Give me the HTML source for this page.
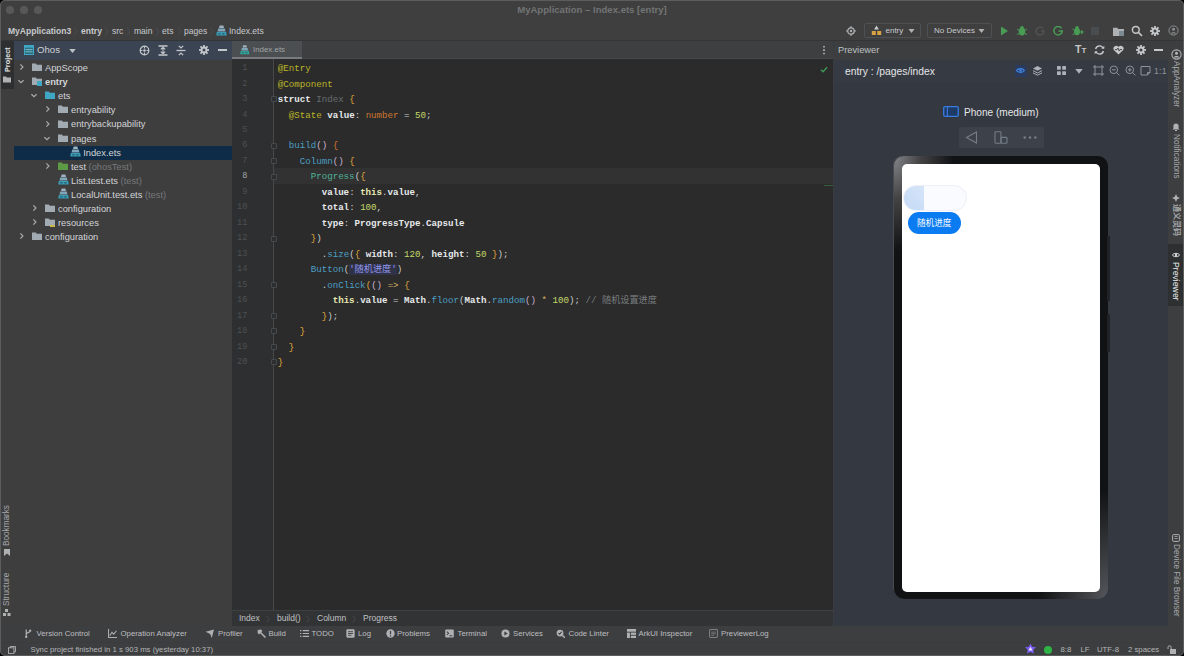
<!DOCTYPE html>
<html lang="zh">
<head>
<meta charset="utf-8">
<title>MyApplication – Index.ets [entry]</title>
<style>
*{box-sizing:border-box;margin:0;padding:0}
html,body{width:1184px;height:656px;overflow:hidden;background:#3d3e40}
body{font-family:"Liberation Sans","Noto Sans CJK SC",sans-serif;font-size:9.2px;color:#bbbbbb}
#app{position:relative;width:1184px;height:656px;overflow:hidden;background:#3d3e40}
.abs{position:absolute}
.t{position:absolute;white-space:nowrap;line-height:14px;height:14px}
#title{left:0;top:0;width:1184px;height:21px;background:#3f3f3f}
#title .name{left:0;width:1184px;top:2.5px;text-align:center;color:#727475;font-weight:bold;font-size:9.55px}
.tl{position:absolute;top:6.3px;width:7.6px;height:7.6px;border-radius:50%;background:#585858}
#nav{left:0;top:21px;width:1184px;height:20px;background:#3f3f40;border-bottom:1px solid #333536}
#nav .t{top:3px;color:#c8cacc;font-size:8.55px}
.combo{border:1px solid #4e5153;border-radius:2px}
#lstripe{left:0;top:41px;width:14px;height:585px;background:#3e3e3f}
#rstripe{left:1168px;top:41px;width:16px;height:584px;background:#3d3e40}
.vt{position:absolute;white-space:nowrap;font-size:8.2px;line-height:10px;height:10px;transform-origin:0 0;color:#a6a8aa}
#proj{left:14px;top:41px;width:218px;height:585px;background:#3e3e3f}
#projhead{left:0;top:0;width:218px;height:19px;background:#3b4453}
.row{position:absolute;left:0;width:218px;height:14px}
.row .t{top:0;color:#d2d4d6;font-size:9.3px}
.row.sel{background:#0e2c48}
.gray{color:#75787a}
#tabs{left:232px;top:41px;width:601px;height:18px;background:#3e3f40;border-bottom:1px solid #47494a}
#tab{left:0;top:0;width:70px;height:18px;background:#4b4f51;border-bottom:2px solid #777b7f}
#editor{left:232px;top:59px;width:601px;height:551px;background:#2b2b2b;overflow:hidden}
#gutter{left:0;top:0;width:42px;height:551px;background:#2e2f30;border-right:1px solid #47494b}
#curline{left:42px;width:559px;background:#323232}
.ln{position:absolute;left:0;width:15.3px;text-align:right;font-family:"Liberation Mono",monospace;font-size:8.6px;color:#4d5053;line-height:15.47px;height:15.47px}
.cl{position:absolute;left:45.7px;white-space:pre;font-family:"Liberation Mono","Noto Sans CJK SC",monospace;font-size:9.17px;line-height:15.47px;height:15.47px;color:#e6e8ea;font-weight:bold}
.cl span{font-weight:normal}
.an{color:#bbb529}
.kw{color:#cc7832}
.dim{color:#666b70}
.br{color:#e0a93a}
.br2{color:#d9762e}
.fn{color:#4d9fc4}
.fn2{color:#4fb39a}
.num{color:#c3d86a}
.pl{color:#c9cbcd}
.pl2{color:#d0b060}
.str{color:#9096ea;background:rgba(58,62,120,.38)}
.cm{color:#787b7e}
.cl span.th{color:#e6e8b0;font-weight:bold}
.fold{position:absolute;left:39px;width:6px;height:6px;border:1px solid #46494b;background:#2d2e2f;border-radius:1px}
#crumbs{left:232px;top:610px;width:601px;height:16px;background:#323334;border-top:1px solid #3e3f40}
#crumbs .t{top:0px;color:#c0c2c4;font-size:8.5px}
#prev{left:833px;top:41px;width:335px;height:585px;background:#343840;border-left:1px solid #383b3f}
#prevhead{left:0;top:0;width:335px;height:19px;background:#3c3e40}
#prevbar{left:0;top:19px;width:335px;height:23px;background:#363a43}
#phone{left:59px;top:114.5px;width:214.6px;height:443.6px;border-radius:10px;background:radial-gradient(ellipse 60px 95px at 0 0,rgba(140,142,146,.95) 0,rgba(110,108,108,.55) 45%,rgba(60,58,58,0) 100%),radial-gradient(ellipse 70px 110px at 100% 100%,rgba(100,103,108,.8) 0,rgba(70,72,76,0) 100%),#111214;box-shadow:inset 1px 0 0 #474b52}
#screen{left:8.8px;top:8.3px;width:198.2px;height:428.6px;border-radius:5px;background:#fff;overflow:hidden}
#capsule{left:1.4px;top:21.2px;width:64px;height:26.4px;border-radius:13.2px;background:#f9fbfe;border:1px solid #eceff5;overflow:hidden}
#capfill{left:-1px;top:-1px;width:20.5px;height:26px;background:linear-gradient(45deg,#c3d9f6,#d6e5f9)}
#btn{left:5.9px;top:48.6px;width:53px;height:22px;border-radius:11px;background:#0a7bf0;color:#fff;font-size:8.6px;line-height:22px;text-align:center;font-family:"Liberation Sans","Noto Sans CJK SC",sans-serif}
#tools{left:0;top:626px;width:1184px;height:16px;background:#3d3e3f}
#tools .t{top:0.5px;color:#bdbfc1;font-size:7.8px}
#status{left:0;top:642px;width:1184px;height:14px;background:#3d3e3f;border-top:1px solid #393b3d}
#status .t{top:-0.5px;color:#b4b6b8;font-size:7.78px}
#frame{left:0;top:0;width:1184px;height:656px;border:1px solid #5c5d5d;border-radius:5px;box-shadow:0 0 0 8px #000;pointer-events:none}
.br3{color:#cdb3d4}
</style>
</head>
<body>
<div id="app">
<div id="title" class="abs">
<div class="tl" style="left:6px"></div>
<div class="tl" style="left:20px"></div>
<div class="tl" style="left:34px"></div>
<div class="t name">MyApplication – Index.ets [entry]</div>
</div>
<div id="nav" class="abs">
<div class="t" style="left:8px;font-weight:bold;">MyApplication3</div>
<div class="t" style="left:81px;font-weight:bold;">entry</div>
<div class="t" style="left:112px;">src</div>
<div class="t" style="left:134px;">main</div>
<div class="t" style="left:162px;">ets</div>
<div class="t" style="left:184px;">pages</div>
<div class="t" style="left:229px;">Index.ets</div>
<svg class="abs" style="left:73px;top:6px" width="5" height="9" viewBox="0 0 5 9"><path d="M1 0.5l3 4-3 4" fill="none" stroke="#4d5052" stroke-width="0.9"/></svg>
<svg class="abs" style="left:104px;top:6px" width="5" height="9" viewBox="0 0 5 9"><path d="M1 0.5l3 4-3 4" fill="none" stroke="#4d5052" stroke-width="0.9"/></svg>
<svg class="abs" style="left:126px;top:6px" width="5" height="9" viewBox="0 0 5 9"><path d="M1 0.5l3 4-3 4" fill="none" stroke="#4d5052" stroke-width="0.9"/></svg>
<svg class="abs" style="left:155px;top:6px" width="5" height="9" viewBox="0 0 5 9"><path d="M1 0.5l3 4-3 4" fill="none" stroke="#4d5052" stroke-width="0.9"/></svg>
<svg class="abs" style="left:177px;top:6px" width="5" height="9" viewBox="0 0 5 9"><path d="M1 0.5l3 4-3 4" fill="none" stroke="#4d5052" stroke-width="0.9"/></svg>
<svg class="abs" style="left:209px;top:6px" width="5" height="9" viewBox="0 0 5 9"><path d="M1 0.5l3 4-3 4" fill="none" stroke="#4d5052" stroke-width="0.9"/></svg>
<svg class="abs" style="left:216px;top:4px" width="11" height="11" viewBox="0 0 11 11"><path d="M3.6 0.4h3.8l.6 2.6H3z" fill="#9fb2be"/><path d="M2.2 3.6h6.6l.7 2.8h-8z" fill="#7fa6ba"/><path d="M0.8 7h9.4l.5 3.6H0.3z" fill="#3a9db6"/><rect x="2.2" y="8" width="2.4" height="1.6" fill="#1f3a44" opacity=".5"/><rect x="6.2" y="8" width="2.4" height="1.6" fill="#1f3a44" opacity=".5"/></svg>
<svg class="abs" style="left:846px;top:5px" width="10" height="10" viewBox="0 0 10 10"><circle cx="5" cy="5" r="3.2" fill="none" stroke="#afb1b3" stroke-width="1.2"/><circle cx="5" cy="5" r="1.2" fill="#afb1b3"/><path d="M5 0v2M5 8v2M0 5h2M8 5h2" stroke="#afb1b3" stroke-width="1.1"/></svg>
<div class="abs combo" style="left:864px;top:2px;width:57px;height:15px"></div>
<svg class="abs" style="left:871px;top:4px" width="11" height="11" viewBox="0 0 11 11"><path d="M5.5 0.5l2.4 4H3.1z" fill="#c9ccce"/><rect x="0.8" y="6" width="4" height="4" fill="#d9a343"/><rect x="6.2" y="6" width="4" height="4" fill="#d9a343"/></svg>
<div class="t" style="left:885.5px;font-size:8px">entry</div>
<svg class="abs" style="left:908px;top:8px" width="7" height="4" viewBox="0 0 7 4"><path d="M0.5 0h6L3.5 4z" fill="#afb1b3"/></svg>
<div class="abs combo" style="left:927px;top:2px;width:65px;height:15px"></div>
<div class="t" style="left:934px;font-size:8px">No Devices</div>
<svg class="abs" style="left:978px;top:8px" width="7" height="4" viewBox="0 0 7 4"><path d="M0.5 0h6L3.5 4z" fill="#afb1b3"/></svg>
<svg class="abs" style="left:1000px;top:5px" width="9" height="10" viewBox="0 0 9 10"><path d="M1 0.5l7 4.5-7 4.5z" fill="#499c54"/></svg>
<svg class="abs" style="left:1017px;top:5px" width="10" height="10" viewBox="0 0 10 10"><ellipse cx="5" cy="5.6" rx="3.2" ry="4" fill="#499c54"/><circle cx="5" cy="1.8" r="1.8" fill="#499c54"/><path d="M0 3l2 1.5M10 3l-2 1.5M0 8.5l2-1M10 8.5l-2-1" stroke="#499c54" stroke-width="1"/></svg>
<svg class="abs" style="left:1035px;top:5px" width="10" height="10" viewBox="0 0 10 10"><path d="M8 2.5A4 4 0 1 0 9 5H6" fill="none" stroke="#515456" stroke-width="1.4"/></svg>
<svg class="abs" style="left:1053px;top:5px" width="10" height="10" viewBox="0 0 10 10"><path d="M8.5 2.2A4.2 4.2 0 1 0 9.3 5H5.5" fill="none" stroke="#499c54" stroke-width="1.5"/></svg>
<svg class="abs" style="left:1072px;top:4px" width="12" height="12" viewBox="0 0 12 12"><ellipse cx="5" cy="6.5" rx="3" ry="3.8" fill="#499c54"/><circle cx="5" cy="2.6" r="1.7" fill="#499c54"/><path d="M7 7h4M9 5.5L11 7 9 8.8" stroke="#499c54" stroke-width="1.2" fill="none"/><path d="M0.5 4l2 1.4M0.5 9.8l2-1.2" stroke="#499c54" stroke-width="1"/></svg>
<div class="abs" style="left:1091px;top:6px;width:8px;height:8px;background:#4a4d4f"></div>
<svg class="abs" style="left:1113px;top:6px" width="11" height="9" viewBox="0 0 10 8"><path d="M0 0.6h3.8l1 1.2H10V8H0z" fill="#afb1b3"/></svg>
<div class="abs" style="left:1119px;top:10px;width:5px;height:5px;background:#7c8a94"></div>
<svg class="abs" style="left:1131px;top:4px" width="12" height="12" viewBox="0 0 12 12"><circle cx="4.8" cy="4.8" r="3.4" fill="none" stroke="#c4c6c8" stroke-width="1.5"/><path d="M7.4 7.4L11 11" stroke="#c4c6c8" stroke-width="1.7"/></svg>
<svg class="abs" style="left:1150px;top:5px" width="10" height="10" viewBox="0 0 10 10"><g fill="#c4c6c8"><circle cx="5" cy="5" r="3.4"/><rect x="4.1" y="0" width="1.8" height="10" transform="rotate(0 5 5)"/><rect x="4.1" y="0" width="1.8" height="10" transform="rotate(45 5 5)"/><rect x="4.1" y="0" width="1.8" height="10" transform="rotate(90 5 5)"/><rect x="4.1" y="0" width="1.8" height="10" transform="rotate(135 5 5)"/></g><circle cx="5" cy="5" r="1.5" fill="#3c3f41"/></svg>
<svg class="abs" style="left:1168px;top:4px" width="11" height="11" viewBox="0 0 11 11"><circle cx="5.5" cy="5.5" r="4.6" fill="none" stroke="#8d9092" stroke-width="1"/><circle cx="5.5" cy="4.3" r="1.5" fill="#8d9092"/><path d="M2.8 8.6c.6-1.8 4.8-1.8 5.4 0" fill="#8d9092"/></svg>
</div>
<div id="lstripe" class="abs">
<div class="abs" style="left:0;top:0;width:14px;height:48px;background:#2d2f30"></div>
<div class="vt" style="left:2.5px;top:30.5px;transform:rotate(-90deg);color:#e0e2e4;font-weight:bold;font-size:7.3px">Project</div>
<svg class="abs" style="left:3px;top:35px" width="8" height="6.5" viewBox="0 0 10 8"><path d="M0 0.6h3.8l1 1.2H10V8H0z" fill="#afb1b3"/></svg>
<div class="vt" style="left:2px;top:505px;transform:rotate(-90deg)">Bookmarks</div>
<svg class="abs" style="left:4px;top:508px" width="6" height="7" viewBox="0 0 6 7"><path d="M0 0h6v7L3 4.6 0 7z" fill="#afb1b3"/></svg>
<div class="vt" style="left:2px;top:565px;transform:rotate(-90deg)">Structure</div>
<svg class="abs" style="left:3px;top:568px" width="8" height="7" viewBox="0 0 8 7"><rect x="0" y="4" width="3" height="3" fill="#afb1b3"/><rect x="4.5" y="4" width="3" height="3" fill="#afb1b3"/><rect x="2" y="0" width="3" height="3" fill="#afb1b3"/></svg>
</div>
<div id="proj" class="abs">
<div id="projhead" class="abs">
<svg class="abs" style="left:10px;top:4px" width="10" height="10" viewBox="0 0 10 10"><rect x="0.5" y="0.5" width="9" height="9" fill="#2c6f80" stroke="#3fa6c4" stroke-width="1"/><rect x="0.5" y="0.5" width="9" height="2.2" fill="#3fa6c4"/><path d="M1.5 4.6h7M1.5 6.8h7" stroke="#7fc4d4" stroke-width="0.9"/></svg>
<div class="t" style="left:23px;top:2px;font-size:9.6px;color:#cdd0d3">Ohos</div>
<svg class="abs" style="left:55px;top:8px" width="7" height="4" viewBox="0 0 7 4"><path d="M0.3 0h6.4L3.5 4z" fill="#c0c3c6"/></svg>
<svg class="abs" style="left:125px;top:4px" width="11" height="11" viewBox="0 0 11 11"><circle cx="5.5" cy="5.5" r="4.3" fill="none" stroke="#c4c7ca" stroke-width="1.2"/><circle cx="5.5" cy="5.5" r="1.3" fill="#c4c7ca"/><path d="M5.5 1v2.4M5.5 7.6V10M1 5.5h2.4M7.6 5.5H10" stroke="#c4c7ca" stroke-width="1.1"/></svg>
<svg class="abs" style="left:144px;top:4px" width="10" height="11" viewBox="0 0 10 11"><path d="M0.5 1h9M0.5 10h9" stroke="#c4c7ca" stroke-width="1.3"/><path d="M5 2.2v6.6M2.8 4.4L5 2.2l2.2 2.2M2.8 6.6L5 8.8l2.2-2.2" stroke="#c4c7ca" stroke-width="1.1" fill="none"/></svg>
<svg class="abs" style="left:162px;top:4px" width="10" height="11" viewBox="0 0 10 11"><path d="M0.5 5.5h9" stroke="#c4c7ca" stroke-width="1.3"/><path d="M2.8 0.8L5 3l2.2-2.2M2.8 10.2L5 8l2.2 2.2" stroke="#c4c7ca" stroke-width="1.2" fill="none"/></svg>
<svg class="abs" style="left:185px;top:4px" width="10" height="10" viewBox="0 0 10 10"><g fill="#c4c7ca"><circle cx="5" cy="5" r="3.4"/><rect x="4.1" y="0" width="1.8" height="10" transform="rotate(0 5 5)"/><rect x="4.1" y="0" width="1.8" height="10" transform="rotate(45 5 5)"/><rect x="4.1" y="0" width="1.8" height="10" transform="rotate(90 5 5)"/><rect x="4.1" y="0" width="1.8" height="10" transform="rotate(135 5 5)"/></g><circle cx="5" cy="5" r="1.5" fill="#3b4453"/></svg>
<div class="abs" style="left:204px;top:8px;width:9px;height:1.6px;background:#c4c7ca"></div>
</div>
<div class="row" style="top:20.0px">
<svg class="abs" style="left:4px;top:2.2px" width="7" height="8" viewBox="0 0 7 8"><path d="M2.4 1.4l2.5 2.6-2.5 2.6" fill="none" stroke="#a6a8aa" stroke-width="1.25"/></svg>
<svg class="abs" style="left:18px;top:2.2px" width="10" height="8" viewBox="0 0 10 8"><path d="M0 0.6h3.8l1 1.2H10V8H0z" fill="#a2abb2"/></svg>
<div class="t" style="left:31px;">AppScope</div>
</div>
<div class="row" style="top:34.1px">
<svg class="abs" style="left:3px;top:3.2px" width="8" height="7" viewBox="0 0 8 7"><path d="M1.4 2.2l2.6 2.5 2.6-2.5" fill="none" stroke="#a6a8aa" stroke-width="1.25"/></svg>
<svg class="abs" style="left:18px;top:2.2px" width="10" height="8" viewBox="0 0 10 8"><path d="M0 0.6h3.8l1 1.2H10V8H0z" fill="#a2abb2"/></svg>
<div class="abs" style="left:23px;top:6.2px;width:5px;height:5px;background:#3fa6c4"></div>
<div class="t" style="left:31px;font-weight:bold;">entry</div>
</div>
<div class="row" style="top:48.2px">
<svg class="abs" style="left:16px;top:3.2px" width="8" height="7" viewBox="0 0 8 7"><path d="M1.4 2.2l2.6 2.5 2.6-2.5" fill="none" stroke="#a6a8aa" stroke-width="1.25"/></svg>
<svg class="abs" style="left:31px;top:2.2px" width="10" height="8" viewBox="0 0 10 8"><path d="M0 0.6h3.8l1 1.2H10V8H0z" fill="#3fa6c4"/></svg>
<div class="t" style="left:44px;">ets</div>
</div>
<div class="row" style="top:62.3px">
<svg class="abs" style="left:30px;top:2.2px" width="7" height="8" viewBox="0 0 7 8"><path d="M2.4 1.4l2.5 2.6-2.5 2.6" fill="none" stroke="#a6a8aa" stroke-width="1.25"/></svg>
<svg class="abs" style="left:44px;top:2.2px" width="10" height="8" viewBox="0 0 10 8"><path d="M0 0.6h3.8l1 1.2H10V8H0z" fill="#a2abb2"/></svg>
<div class="t" style="left:57px;">entryability</div>
</div>
<div class="row" style="top:76.4px">
<svg class="abs" style="left:30px;top:2.2px" width="7" height="8" viewBox="0 0 7 8"><path d="M2.4 1.4l2.5 2.6-2.5 2.6" fill="none" stroke="#a6a8aa" stroke-width="1.25"/></svg>
<svg class="abs" style="left:44px;top:2.2px" width="10" height="8" viewBox="0 0 10 8"><path d="M0 0.6h3.8l1 1.2H10V8H0z" fill="#a2abb2"/></svg>
<div class="t" style="left:57px;">entrybackupability</div>
</div>
<div class="row" style="top:90.5px">
<svg class="abs" style="left:29px;top:3.2px" width="8" height="7" viewBox="0 0 8 7"><path d="M1.4 2.2l2.6 2.5 2.6-2.5" fill="none" stroke="#a6a8aa" stroke-width="1.25"/></svg>
<svg class="abs" style="left:44px;top:2.2px" width="10" height="8" viewBox="0 0 10 8"><path d="M0 0.6h3.8l1 1.2H10V8H0z" fill="#a2abb2"/></svg>
<div class="t" style="left:57px;">pages</div>
</div>
<div class="row sel" style="top:104.6px">
<svg class="abs" style="left:56px;top:0.4px" width="11" height="11" viewBox="0 0 11 11"><path d="M3.6 0.4h3.8l.6 2.6H3z" fill="#9fb2be"/><path d="M2.2 3.6h6.6l.7 2.8h-8z" fill="#7fa6ba"/><path d="M0.8 7h9.4l.5 3.6H0.3z" fill="#3a9db6"/><rect x="2.2" y="8" width="2.4" height="1.6" fill="#1f3a44" opacity=".5"/><rect x="6.2" y="8" width="2.4" height="1.6" fill="#1f3a44" opacity=".5"/></svg>
<div class="t" style="left:69.2px;">Index.ets</div>
</div>
<div class="row" style="top:118.7px">
<svg class="abs" style="left:30px;top:2.2px" width="7" height="8" viewBox="0 0 7 8"><path d="M2.4 1.4l2.5 2.6-2.5 2.6" fill="none" stroke="#a6a8aa" stroke-width="1.25"/></svg>
<svg class="abs" style="left:44px;top:2.2px" width="10" height="8" viewBox="0 0 10 8"><path d="M0 0.6h3.8l1 1.2H10V8H0z" fill="#5d9a45"/></svg>
<div class="t" style="left:57px;">test<span class="gray"> (ohosTest)</span></div>
</div>
<div class="row" style="top:132.8px">
<svg class="abs" style="left:44px;top:0.4px" width="11" height="11" viewBox="0 0 11 11"><path d="M3.6 0.4h3.8l.6 2.6H3z" fill="#9fb2be"/><path d="M2.2 3.6h6.6l.7 2.8h-8z" fill="#7fa6ba"/><path d="M0.8 7h9.4l.5 3.6H0.3z" fill="#3a9db6"/><rect x="2.2" y="8" width="2.4" height="1.6" fill="#1f3a44" opacity=".5"/><rect x="6.2" y="8" width="2.4" height="1.6" fill="#1f3a44" opacity=".5"/></svg>
<div class="t" style="left:57px;">List.test.ets<span class="gray"> (test)</span></div>
</div>
<div class="row" style="top:146.9px">
<svg class="abs" style="left:44px;top:0.4px" width="11" height="11" viewBox="0 0 11 11"><path d="M3.6 0.4h3.8l.6 2.6H3z" fill="#9fb2be"/><path d="M2.2 3.6h6.6l.7 2.8h-8z" fill="#7fa6ba"/><path d="M0.8 7h9.4l.5 3.6H0.3z" fill="#3a9db6"/><rect x="2.2" y="8" width="2.4" height="1.6" fill="#1f3a44" opacity=".5"/><rect x="6.2" y="8" width="2.4" height="1.6" fill="#1f3a44" opacity=".5"/></svg>
<div class="t" style="left:57px;">LocalUnit.test.ets<span class="gray"> (test)</span></div>
</div>
<div class="row" style="top:161.0px">
<svg class="abs" style="left:17px;top:2.2px" width="7" height="8" viewBox="0 0 7 8"><path d="M2.4 1.4l2.5 2.6-2.5 2.6" fill="none" stroke="#a6a8aa" stroke-width="1.25"/></svg>
<svg class="abs" style="left:31px;top:2.2px" width="10" height="8" viewBox="0 0 10 8"><path d="M0 0.6h3.8l1 1.2H10V8H0z" fill="#a2abb2"/></svg>
<div class="t" style="left:44px;">configuration</div>
</div>
<div class="row" style="top:175.1px">
<svg class="abs" style="left:17px;top:2.2px" width="7" height="8" viewBox="0 0 7 8"><path d="M2.4 1.4l2.5 2.6-2.5 2.6" fill="none" stroke="#a6a8aa" stroke-width="1.25"/></svg>
<svg class="abs" style="left:31px;top:2.2px" width="10" height="8" viewBox="0 0 10 8"><path d="M0 0.6h3.8l1 1.2H10V8H0z" fill="#a2abb2"/></svg>
<div class="abs" style="left:36px;top:8.8px;width:5px;height:2px;background:#c9b84a"></div>
<div class="t" style="left:44px;">resources</div>
</div>
<div class="row" style="top:189.2px">
<svg class="abs" style="left:4px;top:2.2px" width="7" height="8" viewBox="0 0 7 8"><path d="M2.4 1.4l2.5 2.6-2.5 2.6" fill="none" stroke="#a6a8aa" stroke-width="1.25"/></svg>
<svg class="abs" style="left:18px;top:2.2px" width="10" height="8" viewBox="0 0 10 8"><path d="M0 0.6h3.8l1 1.2H10V8H0z" fill="#a2abb2"/></svg>
<div class="t" style="left:31px;">configuration</div>
</div>
</div>
<div id="tabs" class="abs"><div id="tab" class="abs">
<svg class="abs" style="left:8px;top:4px" width="9.5" height="9.5" viewBox="0 0 11 11"><path d="M3.6 0.4h3.8l.6 2.6H3z" fill="#9fb2be"/><path d="M2.2 3.6h6.6l.7 2.8h-8z" fill="#7fa6ba"/><path d="M0.8 7h9.4l.5 3.6H0.3z" fill="#34a79d"/><rect x="2.2" y="8" width="2.4" height="1.6" fill="#1f3a44" opacity=".5"/><rect x="6.2" y="8" width="2.4" height="1.6" fill="#1f3a44" opacity=".5"/></svg>
<div class="t" style="left:21px;top:2px;font-size:7.9px;color:#a0a3a5">Index.ets</div>
</div>
<div class="abs" style="left:591px;top:4px;width:2px;height:10px;background:radial-gradient(circle,#9a9c9e 0.8px,transparent 1px) 0 0/2px 3.4px"></div>
</div>
<div id="editor" class="abs">
<div id="gutter" class="abs"></div>
<div id="curline" class="abs" style="top:109.49px;height:15.47px"></div>
<div class="ln" style="top:2.10px"><span>1</span></div>
<div class="cl" style="top:2.10px"><span class="an">@Entry</span></div>
<div class="ln" style="top:17.57px"><span>2</span></div>
<div class="cl" style="top:17.57px"><span class="an">@Component</span></div>
<div class="ln" style="top:33.04px"><span>3</span></div>
<div class="cl" style="top:33.04px">struct <span class="dim">Index</span> <span class="br">{</span></div>
<div class="ln" style="top:48.51px"><span>4</span></div>
<div class="cl" style="top:48.51px">  <span class="an">@State</span> value<span class="pl">:</span> <span class="kw">number</span> <span class="pl">=</span> <span class="num">50</span><span class="pl">;</span></div>
<div class="ln" style="top:63.98px"><span>5</span></div>
<div class="cl" style="top:63.98px"></div>
<div class="ln" style="top:79.45px"><span>6</span></div>
<div class="cl" style="top:79.45px">  <span class="fn">build</span><span class="br3">()</span> <span class="br2">{</span></div>
<div class="ln" style="top:94.92px"><span>7</span></div>
<div class="cl" style="top:94.92px">    <span class="fn">Column</span><span class="br3">()</span> <span class="br">{</span></div>
<div class="ln" style="top:110.39px"><span style="color:#a4a7a9">8</span></div>
<div class="cl" style="top:110.39px">      <span class="fn2">Progress</span><span class="pl">(</span><span class="br">{</span></div>
<div class="ln" style="top:125.86px"><span>9</span></div>
<div class="cl" style="top:125.86px">        value<span class="pl">:</span> <span class="th">this</span><span class="pl">.</span>value<span class="pl">,</span></div>
<div class="ln" style="top:141.33px"><span>10</span></div>
<div class="cl" style="top:141.33px">        total<span class="pl">:</span> <span class="num">100</span><span class="pl">,</span></div>
<div class="ln" style="top:156.80px"><span>11</span></div>
<div class="cl" style="top:156.80px">        type<span class="pl">:</span> ProgressType<span class="pl">.</span>Capsule</div>
<div class="ln" style="top:172.27px"><span>12</span></div>
<div class="cl" style="top:172.27px">      <span class="br">}</span><span class="pl">)</span></div>
<div class="ln" style="top:187.74px"><span>13</span></div>
<div class="cl" style="top:187.74px">        <span class="pl">.</span><span class="fn">size</span><span class="pl">(</span><span class="br">{</span> width<span class="pl">:</span> <span class="num">120</span><span class="pl">,</span> height<span class="pl">:</span> <span class="num">50</span> <span class="br">}</span><span class="pl">);</span></div>
<div class="ln" style="top:203.21px"><span>14</span></div>
<div class="cl" style="top:203.21px">      <span class="fn">Button</span><span class="pl">(</span><span class="str">'随机进度'</span><span class="pl">)</span></div>
<div class="ln" style="top:218.68px"><span>15</span></div>
<div class="cl" style="top:218.68px">        <span class="pl">.</span><span class="fn">onClick</span><span class="br">(</span><span class="br3">()</span> <span class="pl2">=&gt;</span> <span class="br">{</span></div>
<div class="ln" style="top:234.15px"><span>16</span></div>
<div class="cl" style="top:234.15px">          <span class="th">this</span><span class="pl">.</span>value <span class="pl">=</span> Math<span class="pl">.</span><span class="fn">floor</span><span class="pl">(</span>Math<span class="pl">.</span><span class="fn">random</span><span class="br3">()</span> <span class="pl2">*</span> <span class="num">100</span><span class="pl">);</span> <span class="cm">// 随机设置进度</span></div>
<div class="ln" style="top:249.62px"><span>17</span></div>
<div class="cl" style="top:249.62px">        <span class="br">}</span><span class="pl">);</span></div>
<div class="ln" style="top:265.09px"><span>18</span></div>
<div class="cl" style="top:265.09px">    <span class="br">}</span></div>
<div class="ln" style="top:280.56px"><span>19</span></div>
<div class="cl" style="top:280.56px">  <span class="br">}</span></div>
<div class="ln" style="top:296.03px"><span>20</span></div>
<div class="cl" style="top:296.03px"><span class="br">}</span></div>
<div class="fold" style="top:37.44px"></div>
<div class="fold" style="top:83.85px"></div>
<div class="fold" style="top:99.32px"></div>
<div class="fold" style="top:114.79px"></div>
<div class="fold" style="top:176.67px"></div>
<div class="fold" style="top:223.08px"></div>
<div class="fold" style="top:254.02px"></div>
<div class="fold" style="top:269.49px"></div>
<div class="fold" style="top:284.96px"></div>
<div class="fold" style="top:300.43px"></div>
<div class="abs" style="left:592px;top:126px;width:9px;height:1.2px;background:#35603a"></div>
<svg class="abs" style="left:587.5px;top:6.5px" width="8" height="7" viewBox="0 0 9 8"><path d="M1 4.2l2.4 2.4L8 1.4" fill="none" stroke="#3f9a55" stroke-width="1.5"/></svg>
</div>
<div id="crumbs" class="abs">
<div class="t" style="left:7px">Index</div>
<div class="t" style="left:45px">build()</div>
<div class="t" style="left:85px">Column</div>
<div class="t" style="left:131px">Progress</div>
<svg class="abs" style="left:34px;top:4px" width="4" height="8" viewBox="0 0 4 8"><path d="M0.7 0.5l2.6 3.5-2.6 3.5" fill="none" stroke="#4a4c4e" stroke-width="0.8"/></svg>
<svg class="abs" style="left:74px;top:4px" width="4" height="8" viewBox="0 0 4 8"><path d="M0.7 0.5l2.6 3.5-2.6 3.5" fill="none" stroke="#4a4c4e" stroke-width="0.8"/></svg>
<svg class="abs" style="left:120px;top:4px" width="4" height="8" viewBox="0 0 4 8"><path d="M0.7 0.5l2.6 3.5-2.6 3.5" fill="none" stroke="#4a4c4e" stroke-width="0.8"/></svg>
</div>
<div id="prev" class="abs">
<div id="prevhead" class="abs">
<div class="t" style="left:4px;top:2px;font-size:9.3px;color:#bfc1c3">Previewer</div>
<div class="t" style="left:241px;top:1px;font-size:10.5px;color:#c6c8ca;font-weight:bold">T<span style="font-size:8px">T</span></div>
<svg class="abs" style="left:260px;top:4px" width="11" height="10" viewBox="0 0 11 10"><path d="M9 3A4 4 0 0 0 1.6 4M2 7a4 4 0 0 0 7.4-1" fill="none" stroke="#c6c8ca" stroke-width="1.4"/><path d="M10.3 0.8v3h-3zM0.7 9.2v-3h3z" fill="#c6c8ca"/></svg>
<svg class="abs" style="left:279px;top:4px" width="11" height="10" viewBox="0 0 11 10"><path d="M5.5 9.6L1 5.2A2.6 2.6 0 0 1 5.5 2 2.6 2.6 0 0 1 10 5.2z" fill="#c6c8ca"/><path d="M2 4.6h2l1-1.6 1.2 3 .8-1.4h2" fill="none" stroke="#3c3f41" stroke-width="0.9"/></svg>
<svg class="abs" style="left:302px;top:4px" width="10" height="10" viewBox="0 0 10 10"><g fill="#c6c8ca"><circle cx="5" cy="5" r="3.4"/><rect x="4.1" y="0" width="1.8" height="10" transform="rotate(0 5 5)"/><rect x="4.1" y="0" width="1.8" height="10" transform="rotate(45 5 5)"/><rect x="4.1" y="0" width="1.8" height="10" transform="rotate(90 5 5)"/><rect x="4.1" y="0" width="1.8" height="10" transform="rotate(135 5 5)"/></g><circle cx="5" cy="5" r="1.5" fill="#3c3f41"/></svg>
<div class="abs" style="left:320px;top:8px;width:9px;height:1.6px;background:#c6c8ca"></div>
</div>
<div id="prevbar" class="abs"></div>
<div class="t" style="left:11px;top:23.5px;font-size:10.3px;color:#e4e6e8">entry : /pages/index</div>
<div class="abs" style="left:180.5px;top:23.6px;width:12px;height:12px;background:#2a3b5e;border-radius:2px"></div>
<svg class="abs" style="left:182px;top:25.3px" width="9" height="9" viewBox="0 0 9 9"><path d="M0.6 4.5C2 2 7 2 8.4 4.5 7 7 2 7 .6 4.5z" fill="none" stroke="#3f86e8" stroke-width="1.1"/><circle cx="4.5" cy="4.5" r="1.3" fill="#3f86e8"/></svg>
<svg class="abs" style="left:198px;top:24.3px" width="11" height="11" viewBox="0 0 11 11"><path d="M5.5 1L10 3.4 5.5 5.8 1 3.4z" fill="#aeb2b8"/><path d="M1 5.6l4.5 2.4L10 5.6M1 7.8l4.5 2.4L10 7.8" fill="none" stroke="#aeb2b8" stroke-width="1"/></svg>
<svg class="abs" style="left:223px;top:25.3px" width="9" height="9" viewBox="0 0 9 9"><g fill="#aeb2b8"><rect x="0" y="0" width="3.8" height="3.8" rx=".6"/><rect x="5.2" y="0" width="3.8" height="3.8" rx=".6"/><rect x="0" y="5.2" width="3.8" height="3.8" rx=".6"/><rect x="5.2" y="5.2" width="3.8" height="3.8" rx=".6"/></g></svg>
<svg class="abs" style="left:241px;top:28.3px" width="8" height="5" viewBox="0 0 8 5"><path d="M0.3 0h7.4L4 4.8z" fill="#aeb2b8"/></svg>
<svg class="abs" style="left:259px;top:24.3px" width="11" height="11" viewBox="0 0 11 11"><rect x="2" y="2" width="7" height="7" fill="none" stroke="#8e939a" stroke-width="1"/><path d="M2 0v2H0M9 0v2h2M2 11V9H0M9 11V9h2" fill="none" stroke="#8e939a" stroke-width="1"/></svg>
<svg class="abs" style="left:275px;top:24.3px" width="11" height="11" viewBox="0 0 11 11"><circle cx="4.8" cy="4.8" r="3.8" fill="none" stroke="#8e939a" stroke-width="1"/><path d="M3 4.8h3.6M7.6 7.6L10.4 10.4" stroke="#8e939a" stroke-width="1"/></svg>
<svg class="abs" style="left:291px;top:24.3px" width="11" height="11" viewBox="0 0 11 11"><circle cx="4.8" cy="4.8" r="3.8" fill="none" stroke="#8e939a" stroke-width="1"/><path d="M3 4.8h3.6M4.8 3v3.6M7.6 7.6L10.4 10.4" stroke="#8e939a" stroke-width="1"/></svg>
<svg class="abs" style="left:306px;top:24.3px" width="11" height="11" viewBox="0 0 11 11"><path d="M1 1.5h9v6L7.5 10H1z" fill="none" stroke="#8e939a" stroke-width="1"/><path d="M10 7.5H7.5V10" fill="none" stroke="#8e939a" stroke-width="1"/></svg>
<div class="t" style="left:320px;top:23.3px;font-size:8.6px;color:#8e939a;letter-spacing:0.3px">1:1</div>
<svg class="abs" style="left:109px;top:65px" width="16" height="11" viewBox="0 0 16 11"><rect x="0.7" y="0.7" width="14.6" height="9.6" rx="1.4" fill="#1d3b66" stroke="#3a7be0" stroke-width="1.3"/><path d="M4.4 0.7v9.6" stroke="#3a7be0" stroke-width="1.1"/></svg>
<div class="t" style="left:130px;top:64.5px;font-size:10.1px;color:#e4e6e8">Phone (medium)</div>
<div class="abs" style="left:125px;top:86px;width:85px;height:21px;background:#3d424a;border-radius:2px"></div>
<svg class="abs" style="left:131px;top:90px" width="13" height="13" viewBox="0 0 13 13"><path d="M11.5 1v11L1.5 6.5z" fill="none" stroke="#767c86" stroke-width="1.1"/></svg>
<svg class="abs" style="left:160px;top:90px" width="14" height="13" viewBox="0 0 14 13"><rect x="1" y="0.8" width="6" height="11.4" rx=".8" fill="none" stroke="#767c86" stroke-width="1.1"/><rect x="7" y="6.4" width="6" height="5.8" rx=".8" fill="none" stroke="#767c86" stroke-width="1.1"/></svg>
<svg class="abs" style="left:189px;top:95px" width="14" height="3" viewBox="0 0 14 3"><g fill="#767c86"><circle cx="1.7" cy="1.5" r="1.3"/><circle cx="7" cy="1.5" r="1.3"/><circle cx="12.3" cy="1.5" r="1.3"/></g></svg>
<div id="phone" class="abs"><div id="screen" class="abs">
<div class="abs" id="capsule"><div class="abs" id="capfill"></div></div>
<div class="abs" id="btn">随机进度</div>
</div></div>
<div class="abs" style="left:273.4px;top:195px;width:2.2px;height:65px;background:#202226;border-radius:1px"></div>
<div class="abs" style="left:273.4px;top:273px;width:2.2px;height:38px;background:#202226;border-radius:1px"></div>
</div>
<div id="rstripe" class="abs">
<div class="abs" style="left:0;top:203px;width:16px;height:62px;background:#2d2f30"></div>
<div class="vt" style="left:13px;top:20px;transform:rotate(90deg);">AppAnalyzer</div>
<div class="vt" style="left:13px;top:93px;transform:rotate(90deg);">Notifications</div>
<div class="vt" style="left:13px;top:162.5px;transform:rotate(90deg);font-size:8px;font-weight:bold">通义灵码</div>
<div class="vt" style="left:13px;top:220.5px;transform:rotate(90deg);color:#eceef0;font-size:8.7px">Previewer</div>
<div class="vt" style="left:13px;top:503px;transform:rotate(90deg);">Device File Browser</div>
<svg class="abs" style="left:3px;top:7.5px" width="11" height="11" viewBox="0 0 11 11"><circle cx="5.5" cy="5.5" r="4.6" fill="none" stroke="#b4b6b8" stroke-width="1.1"/><circle cx="5.5" cy="4.2" r="1.5" fill="#b4b6b8"/><path d="M2.6 8.4c.5-2 5.3-2 5.8 0" fill="#b4b6b8"/></svg>
<svg class="abs" style="left:4px;top:82px" width="8" height="8" viewBox="0 0 8 8"><path d="M4 0.5a2.6 2.6 0 0 1 2.6 2.6V5.5l.9 1H0.5l.9-1V3.1A2.6 2.6 0 0 1 4 .5zM3 7h2v1H3z" fill="#afb1b3"/></svg>
<svg class="abs" style="left:4px;top:153px" width="8" height="8" viewBox="0 0 8 8"><path d="M4 0l1.2 2.8L8 4 5.2 5.2 4 8 2.8 5.2 0 4l2.8-1.2z" fill="#afb1b3"/></svg>
<svg class="abs" style="left:4px;top:210px" width="8" height="8" viewBox="0 0 8 8"><path d="M0.3 4C1.6 1.8 6.4 1.8 7.7 4 6.4 6.2 1.6 6.2.3 4z" fill="none" stroke="#d4d6d8" stroke-width="1"/><circle cx="4" cy="4" r="1.2" fill="#d4d6d8"/></svg>
<svg class="abs" style="left:4px;top:493px" width="8" height="8" viewBox="0 0 8 8"><rect x="0.6" y="0.6" width="6.8" height="6.8" rx="1" fill="none" stroke="#afb1b3" stroke-width="1"/><path d="M2.4 2.6h3.2M2.4 4.6h3.2" stroke="#afb1b3" stroke-width=".8"/></svg>
</div>
<div id="tools" class="abs">
<svg class="abs" style="left:23.5px;top:3px" width="9" height="9" viewBox="0 0 8 8"><path d="M2 0.5v7M2 4.5c0-1.5 3.5-1 3.5-3" fill="none" stroke="#afb1b3" stroke-width="1.1"/><circle cx="2" cy="7" r="1" fill="#afb1b3"/><circle cx="5.5" cy="1.5" r="1" fill="#afb1b3"/></svg>
<div class="t" style="left:36.5px">Version Control</div>
<svg class="abs" style="left:107.5px;top:3px" width="9" height="9" viewBox="0 0 8 8"><path d="M0.5 0v7.5H8" fill="none" stroke="#afb1b3" stroke-width="0.9"/><path d="M1.5 6l2-3 1.6 1.6L7.5 1.5" fill="none" stroke="#afb1b3" stroke-width="0.9"/></svg>
<div class="t" style="left:120.5px">Operation Analyzer</div>
<svg class="abs" style="left:204.5px;top:3px" width="9" height="9" viewBox="0 0 8 8"><path d="M0.5 2.5L8 0.5 6 8 4.6 4.4z" fill="#afb1b3"/></svg>
<div class="t" style="left:218px">Profiler</div>
<svg class="abs" style="left:256.5px;top:3px" width="9" height="9" viewBox="0 0 8 8"><path d="M0.6 0.8l3-.4 1.2 1.4-1 1L8 7l-1 1-4.2-4.2-1 1L0.6 3.6z" fill="#afb1b3"/></svg>
<div class="t" style="left:268.5px">Build</div>
<svg class="abs" style="left:299.5px;top:3px" width="9" height="9" viewBox="0 0 8 8"><path d="M0 1.5h1.2M0 4h1.2M0 6.5h1.2M2.4 1.5H8M2.4 4H8M2.4 6.5H8" stroke="#afb1b3" stroke-width="1.1"/></svg>
<div class="t" style="left:311.5px">TODO</div>
<svg class="abs" style="left:345.5px;top:3px" width="9" height="9" viewBox="0 0 8 8"><rect x="0.3" y="0.3" width="7.4" height="7.4" rx="1" fill="#afb1b3"/><path d="M1.8 2.4h4.4M1.8 4h4.4M1.8 5.6h3" stroke="#3c3f41" stroke-width=".8"/></svg>
<div class="t" style="left:358px">Log</div>
<svg class="abs" style="left:385.5px;top:3px" width="9" height="9" viewBox="0 0 8 8"><circle cx="4" cy="4" r="3.7" fill="#afb1b3"/><path d="M4 1.8v2.8M4 5.6v1" stroke="#3c3f41" stroke-width="1.1"/></svg>
<div class="t" style="left:397px">Problems</div>
<svg class="abs" style="left:444.5px;top:3px" width="9" height="9" viewBox="0 0 8 8"><rect x="0.2" y="0.5" width="7.6" height="7" rx=".8" fill="#afb1b3"/><path d="M1.6 2.4l1.6 1.4-1.6 1.4M4 6h2.4" stroke="#3c3f41" stroke-width=".9" fill="none"/></svg>
<div class="t" style="left:457.5px">Terminal</div>
<svg class="abs" style="left:500.5px;top:3px" width="9" height="9" viewBox="0 0 8 8"><circle cx="4" cy="4" r="3.6" fill="#afb1b3"/><path d="M3 2.2v3.6L6 4z" fill="#3c3f41"/></svg>
<div class="t" style="left:513px">Services</div>
<svg class="abs" style="left:555.5px;top:3px" width="9" height="9" viewBox="0 0 8 8"><circle cx="3.6" cy="3.6" r="3" fill="#afb1b3"/><path d="M5.6 5.6L8 8" stroke="#afb1b3" stroke-width="1.4"/><path d="M2.2 3.6l1 1 1.8-2" stroke="#3c3f41" stroke-width=".9" fill="none"/></svg>
<div class="t" style="left:568.5px">Code Linter</div>
<svg class="abs" style="left:626.5px;top:3px" width="9" height="9" viewBox="0 0 8 8"><rect x="0" y="0" width="8" height="2.4" fill="#afb1b3"/><rect x="0" y="3.2" width="2.6" height="4.8" fill="#afb1b3"/><rect x="3.4" y="3.2" width="4.6" height="2" fill="#afb1b3"/><rect x="3.4" y="6" width="4.6" height="2" fill="#afb1b3"/></svg>
<div class="t" style="left:638.5px">ArkUI Inspector</div>
<svg class="abs" style="left:708.5px;top:3px" width="9" height="9" viewBox="0 0 8 8"><rect x="0.5" y="0.5" width="7" height="7" rx=".8" fill="none" stroke="#7e8183" stroke-width=".9"/><path d="M2 2.8h4M2 4.2h4M2 5.6h2.6" stroke="#7e8183" stroke-width=".7"/></svg>
<div class="t" style="left:721px">PreviewerLog</div>
</div>
<div id="status" class="abs">
<svg class="abs" style="left:8px;top:3px" width="8" height="8" viewBox="0 0 8 8"><rect x="0.5" y="1.8" width="5.4" height="5.6" fill="none" stroke="#afb1b3" stroke-width=".9"/><path d="M2.2 1.8V0.5h5.3v5.4H6" fill="none" stroke="#afb1b3" stroke-width=".9"/></svg>
<div class="t" style="left:30.5px">Sync project finished in 1 s 903 ms (yesterday 10:37)</div>
<svg class="abs" style="left:1023.5px;top:0px" width="13" height="13" viewBox="0 0 12 12"><path d="M6 0.5l1.6 3 3.4.4-2.4 2.4.6 3.5L6 8.2 2.8 9.8l.6-3.5L1 3.9l3.4-.4z" fill="#7a5cf0"/><path d="M6 3.4L8 7H4z" fill="#e8e4ff"/></svg>
<div class="abs" style="left:1044px;top:3px;width:8px;height:8px;border-radius:50%;background:#2fb344"></div>
<div class="t" style="left:1060.5px">8:8</div>
<div class="t" style="left:1080.5px">LF</div>
<div class="t" style="left:1097px">UTF-8</div>
<div class="t" style="left:1128px">2 spaces</div>
<svg class="abs" style="left:1167px;top:2px" width="9" height="9" viewBox="0 0 9 9"><rect x="3" y="4" width="6" height="5" fill="#afb1b3"/><path d="M1 4V2.4a1.6 1.6 0 0 1 3.2 0V4" fill="none" stroke="#afb1b3" stroke-width="1"/></svg>
</div>
<div id="frame" class="abs"></div>
</div>
</body>
</html>
